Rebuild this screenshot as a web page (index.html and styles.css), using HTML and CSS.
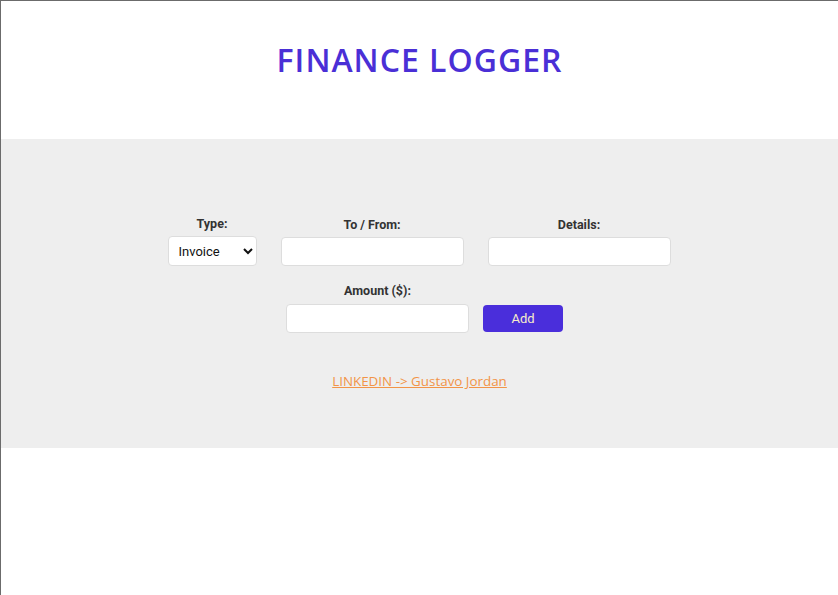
FILE: index.html
```html
<!DOCTYPE html>
<html lang="en">
<head>
<meta charset="utf-8">
<title>Finance Logger</title>
<link rel="stylesheet" href="styles.css">
</head>
<body>
<div class="frame">
  <header class="header">
    <h1 class="title">FINANCE LOGGER</h1>
  </header>
  <section class="panel">
    <form class="form">
      <div class="row row-top">
        <div class="field field-type">
          <label class="label">Type:</label>
          <select class="select">
            <option>Invoice</option>
            <option>Payment</option>
          </select>
        </div>
        <div class="field">
          <label class="label">To / From:</label>
          <input class="input" type="text">
        </div>
        <div class="field">
          <label class="label">Details:</label>
          <input class="input" type="text">
        </div>
      </div>
      <div class="row row-bottom">
        <div class="field">
          <label class="label">Amount ($):</label>
          <input class="input" type="number">
        </div>
        <button class="btn" type="button">Add</button>
      </div>
    </form>
    <div class="linkwrap">
      <a class="link" href="#">LINKEDIN -&gt; Gustavo Jordan</a>
    </div>
  </section>
</div>
</body>
</html>
```
FILE: styles.css
```css
html, body {
  margin: 0;
  padding: 0;
  background: #fff;
}
.frame {
  height: 595px;
  box-sizing: border-box;
  border-top: 1px solid #6b6b6b;
  border-left: 1px solid #6b6b6b;
}
.header {
  height: 138px;
  display: flex;
  justify-content: center;
}
.title {
  margin: 37px 0 0;
  font-family: "Open Sans", sans-serif;
  font-weight: 600;
  font-size: 32px;
  letter-spacing: 1px;
  color: #4a2fd6;
}
.panel {
  background: #eeeeee;
  height: 309px;
  box-sizing: border-box;
  padding-top: 78px;
}
.form {
  display: flex;
  flex-direction: column;
  align-items: center;
  gap: 18px;
}
.row {
  display: flex;
  align-items: flex-end;
  gap: 24px;
}
.row-top {
  margin-right: 1px;
}
.row-bottom {
  gap: 14px;
  padding-left: 10px;
}
.field {
  display: flex;
  flex-direction: column;
  align-items: center;
  gap: 5px;
}
.row-bottom .field {
  gap: 6px;
}
.label {
  font-family: Roboto, "Liberation Sans", sans-serif;
  font-weight: 700;
  font-size: 12.5px;
  color: #333;
  line-height: 14px;
}
.select {
  width: 89px;
  height: 30px;
  box-sizing: border-box;
  border: 1px solid #ddd;
  border-radius: 4px;
  background: #fff;
  font-family: Roboto, "Liberation Sans", sans-serif;
  font-size: 13px;
  color: #111;
  padding: 0 6px;
}
.input {
  width: 183px;
  height: 29px;
  box-sizing: border-box;
  border: 1px solid #ddd;
  border-radius: 4px;
  background: #fff;
}
.btn {
  width: 80px;
  height: 27px;
  margin-bottom: 1px;
  border: none;
  border-radius: 4px;
  background: #4a2edb;
  color: #f7ecc9;
  font-family: Roboto, "Liberation Sans", sans-serif;
  font-size: 13px;
}
.linkwrap {
  display: flex;
  justify-content: center;
  margin-top: 39px;
}
.link {
  font-family: "Open Sans", sans-serif;
  font-size: 13.4px;
  color: #f29447;
}
```
